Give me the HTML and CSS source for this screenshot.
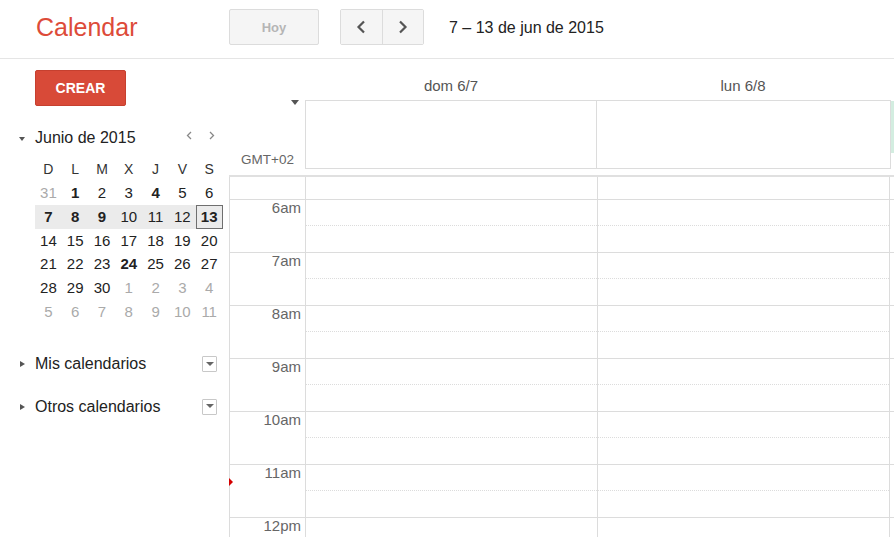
FILE: index.html
```
<!DOCTYPE html>
<html lang="es">
<head>
<meta charset="utf-8">
<title>Calendar</title>
<link rel="stylesheet" href="styles.css">
</head>
<body>
<div class="app">
  <header class="topbar">
    <div class="logo">Calendar</div>
    <button class="btn today">Hoy</button>
    <div class="nav-group">
      <button class="btn nav"><svg width="10" height="14" viewBox="0 0 10 14"><path d="M8 1.5 L2.5 7 L8 12.5" fill="none" stroke="#555" stroke-width="2.2"/></svg></button>
      <button class="btn nav nav-next"><svg width="10" height="14" viewBox="0 0 10 14"><path d="M2 1.5 L7.5 7 L2 12.5" fill="none" stroke="#555" stroke-width="2.2"/></svg></button>
    </div>
    <div class="range">7 – 13 de jun de 2015</div>
  </header>

  <div class="main">
    <aside class="sidebar">
      <button class="create">CREAR</button>

      <div class="mini">
        <div class="mini-head">
          <span class="tri-down"></span>
          <span class="mini-title">Junio de 2015</span>
          <span class="mini-nav">
            <svg class="mini-prev" width="6" height="9" viewBox="0 0 6 9"><path d="M5 1 L1.5 4.5 L5 8" fill="none" stroke="#888" stroke-width="1.3"/></svg>
            <svg width="6" height="9" viewBox="0 0 6 9"><path d="M1 1 L4.5 4.5 L1 8" fill="none" stroke="#888" stroke-width="1.3"/></svg>
          </span>
        </div>
        <div class="mini-grid">
          <span class="dow">D</span><span class="dow">L</span><span class="dow">M</span><span class="dow">X</span><span class="dow">J</span><span class="dow">V</span><span class="dow">S</span>

          <span class="d other">31</span><span class="d b">1</span><span class="d">2</span><span class="d">3</span><span class="d b">4</span><span class="d">5</span><span class="d">6</span>

          <span class="d sel b">7</span><span class="d sel b">8</span><span class="d sel b">9</span><span class="d sel">10</span><span class="d sel">11</span><span class="d sel">12</span><span class="d sel b today-box">13</span>

          <span class="d">14</span><span class="d">15</span><span class="d">16</span><span class="d">17</span><span class="d">18</span><span class="d">19</span><span class="d">20</span>

          <span class="d">21</span><span class="d">22</span><span class="d">23</span><span class="d b">24</span><span class="d">25</span><span class="d">26</span><span class="d">27</span>

          <span class="d">28</span><span class="d">29</span><span class="d">30</span><span class="d other">1</span><span class="d other">2</span><span class="d other">3</span><span class="d other">4</span>

          <span class="d other">5</span><span class="d other">6</span><span class="d other">7</span><span class="d other">8</span><span class="d other">9</span><span class="d other">10</span><span class="d other">11</span>
        </div>
      </div>

      <div class="cal-section">
        <div class="cal-row">
          <span class="tri-right"></span>
          <span class="cal-name">Mis calendarios</span>
          <span class="dd-box"><span class="dd-tri"></span></span>
        </div>
        <div class="cal-row">
          <span class="tri-right"></span>
          <span class="cal-name">Otros calendarios</span>
          <span class="dd-box"><span class="dd-tri"></span></span>
        </div>
      </div>
    </aside>

    <section class="week">
      <div class="week-head">
        <div class="gutter"></div>
        <div class="day-name">dom 6/7</div>
        <div class="day-name">lun 6/8</div>
      </div>

      <div class="allday">
        <div class="gutter tz">
          <span class="tz-tri"></span>
          <span class="tz-label">GMT+02</span>
        </div>
        <div class="allday-box">
          <div class="allday-cell"></div>
          <div class="allday-cell"></div>
        </div>
        <div class="allday-scroll"></div>
      </div>

      <div class="grid">
        <div class="times">
          <div class="slot-first"></div>
          <div class="hour"><span class="tlabel">6am</span></div>
          <div class="hour"><span class="tlabel">7am</span></div>
          <div class="hour"><span class="tlabel">8am</span></div>
          <div class="hour"><span class="tlabel">9am</span></div>
          <div class="hour"><span class="tlabel">10am</span></div>
          <div class="hour"><span class="tlabel">11am</span></div>
          <div class="hour"><span class="tlabel">12pm</span></div>
        </div>
        <div class="daycol">
          <div class="slot-first"></div>
          <div class="hour"><div class="half"></div></div>
          <div class="hour"><div class="half"></div></div>
          <div class="hour"><div class="half"></div></div>
          <div class="hour"><div class="half"></div></div>
          <div class="hour"><div class="half"></div></div>
          <div class="hour"><div class="half"></div></div>
          <div class="hour"><div class="half"></div></div>
        </div>
        <div class="daycol">
          <div class="slot-first"></div>
          <div class="hour"><div class="half"></div></div>
          <div class="hour"><div class="half"></div></div>
          <div class="hour"><div class="half"></div></div>
          <div class="hour"><div class="half"></div></div>
          <div class="hour"><div class="half"></div></div>
          <div class="hour"><div class="half"></div></div>
          <div class="hour"><div class="half"></div></div>
        </div>
        <div class="restcol">
          <div class="slot-first"></div>
          <div class="hour"></div>
          <div class="hour"></div>
          <div class="hour"></div>
          <div class="hour"></div>
          <div class="hour"></div>
          <div class="hour"></div>
          <div class="hour"></div>
        </div>
        <span class="now-marker"></span>
      </div>
    </section>
  </div>
</div>
</body>
</html>
```
FILE: styles.css
```
* { box-sizing: border-box; }

body {
  margin: 0;
  background: #fff;
  font-family: "Liberation Sans", Arial, sans-serif;
  color: #222;
}

.app {
  width: 894px;
  height: 537px;
  overflow: hidden;
}

/* ---------- top bar ---------- */
.topbar {
  height: 59px;
  padding: 9px 0 0 36px;
  border-bottom: 1px solid #e5e5e5;
  display: flex;
  align-items: flex-start;
}

.logo {
  width: 193px;
  line-height: 37px;
  font-size: 25px;
  color: #dd4b39;
}

.btn {
  font-family: inherit;
  padding: 0;
  margin: 0;
  background: #f5f5f5;
  cursor: default;
}

.today {
  width: 90px;
  height: 36px;
  border: 1px solid #dcdcdc;
  border-radius: 2px;
  font-size: 13px;
  font-weight: bold;
  color: #b5b5b5;
  margin-right: 21px;
}

.nav-group {
  width: 84px;
  height: 36px;
  display: flex;
  border: 1px solid #dcdcdc;
  border-radius: 2px;
  background: #f5f5f5;
  margin-right: 25px;
}

.nav {
  flex: 1;
  border: 0;
  display: flex;
  align-items: center;
  justify-content: center;
}

.nav-next {
  border-left: 1px solid #dcdcdc;
}

.range {
  line-height: 37px;
  font-size: 16px;
  color: #222;
}

/* ---------- main ---------- */
.main {
  display: flex;
  height: 478px;
}

.sidebar {
  width: 229px;
  flex: none;
}

.create {
  display: block;
  margin: 11px 0 0 35px;
  width: 91px;
  height: 36px;
  padding: 0;
  border: 1px solid #c6402f;
  border-radius: 2px;
  background: #d84a38;
  color: #fff;
  font-family: inherit;
  font-size: 14px;
  font-weight: bold;
}

/* mini calendar */
.mini {
  margin-top: 21px;
}

.mini-head {
  height: 22px;
  display: flex;
  align-items: center;
  padding: 0 14px 0 19px;
}

.tri-down {
  width: 0;
  height: 0;
  border-left: 3.5px solid transparent;
  border-right: 3.5px solid transparent;
  border-top: 4px solid #555;
  margin: 2px 10px 0 0;
}

.mini-title {
  flex: 1;
  font-size: 16px;
  color: #222;
}

.mini-nav {
  display: flex;
  align-items: center;
  margin-bottom: 5px;
}

.mini-prev {
  margin-right: 17px;
}

.mini-grid {
  margin: 8.6px 0 0 35px;
  display: grid;
  grid-template-columns: repeat(7, 26.8px);
  grid-auto-rows: 23.7px;
}

.mini-grid span {
  text-align: center;
  line-height: 23.7px;
}

.dow {
  font-size: 14px;
  color: #333;
}

.d {
  font-size: 15px;
  color: #222;
}

.d.b { font-weight: bold; }
.d.other { color: #aaa; }
.d.sel { background: #ebebeb; }

.today-box {
  border: 1px solid #6f6f6f;
  line-height: 21.7px !important;
}

/* calendars list */
.cal-section {
  margin-top: 19.6px;
}

.cal-row {
  height: 42.4px;
  display: flex;
  align-items: center;
  padding: 0 12px 0 20px;
}

.tri-right {
  width: 0;
  height: 0;
  border-top: 3.5px solid transparent;
  border-bottom: 3.5px solid transparent;
  border-left: 5px solid #555;
  margin-right: 10px;
}

.cal-name {
  flex: 1;
  font-size: 16px;
  color: #222;
}

.dd-box {
  width: 15px;
  height: 16px;
  border: 1px solid #c8c8c8;
  border-radius: 1px;
  display: flex;
  align-items: center;
  justify-content: center;
}

.dd-tri {
  width: 0;
  height: 0;
  border-left: 4px solid transparent;
  border-right: 4px solid transparent;
  border-top: 4px solid #666;
  margin-top: -1px;
}

/* ---------- week view ---------- */
.week {
  flex: 1;
  min-width: 0;
}

.week-head {
  height: 41px;
  display: flex;
}

.gutter {
  width: 76px;
  flex: none;
}

.day-name {
  width: 292px;
  flex: none;
  padding-top: 17px;
  line-height: 20px;
  text-align: center;
  font-size: 15px;
  color: #555;
}

.allday {
  height: 69px;
  display: flex;
}

.tz {
  display: flex;
  flex-direction: column;
  align-items: flex-end;
  justify-content: space-between;
  padding: 0 11px 1px 0;
}

.tz-tri {
  width: 0;
  height: 0;
  border-left: 4.5px solid transparent;
  border-right: 4.5px solid transparent;
  border-top: 5px solid #555;
  margin-right: -5px;
}

.tz-label {
  font-size: 13.5px;
  line-height: 16px;
  color: #666;
}

.allday-box {
  width: 586px;
  flex: none;
  display: flex;
  border: 1px solid #dcdcdc;
}

.allday-cell {
  width: 291px;
  border-right: 1px solid #dcdcdc;
}

.allday-cell:last-child {
  flex: 1;
  border-right: 0;
}

.allday-scroll {
  width: 3px;
  height: 52px;
  margin-top: 1px;
  background: #d3ede0;
}

/* time grid */
.grid {
  position: relative;
  display: flex;
  margin-top: 6px;
  border-top: 2px solid #e0e0e0;
  height: 362px;
  overflow: hidden;
}

.times {
  width: 77px;
  flex: none;
  border-left: 1px solid #dcdcdc;
  border-right: 1px solid #dcdcdc;
}

.daycol {
  width: 292px;
  flex: none;
  border-right: 1px solid #dcdcdc;
}

.restcol {
  flex: 1;
}

.slot-first {
  height: 23px;
  border-bottom: 1px solid #dcdcdc;
}

.hour {
  height: 53px;
  border-bottom: 1px solid #dcdcdc;
}

.half {
  height: 26px;
  border-bottom: 1px dotted #dcdcdc;
}

.tlabel {
  display: block;
  text-align: right;
  padding: 0 4px 0 0;
  font-size: 15px;
  line-height: 16px;
  color: #666;
}

.now-marker {
  position: absolute;
  left: 0;
  top: 301px;
  width: 0;
  height: 0;
  border-top: 4px solid transparent;
  border-bottom: 4px solid transparent;
  border-left: 4px solid #d40000;
}
```
